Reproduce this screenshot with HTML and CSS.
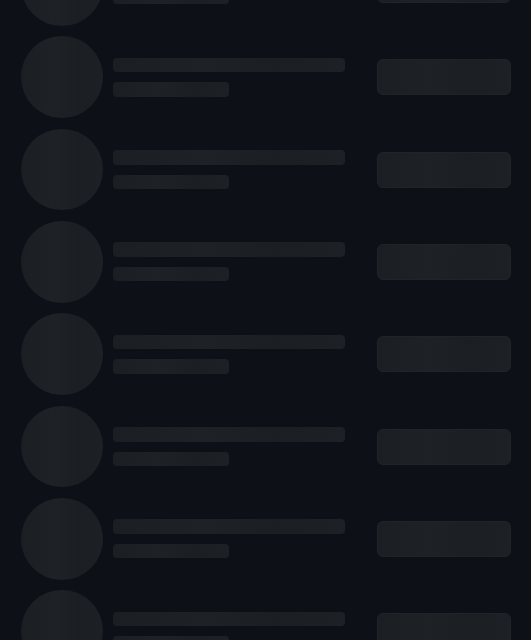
FILE: index.html
```html
<!DOCTYPE html>
<html lang="en">

<head>
    <meta charset="UTF-8">
    <meta name="viewport" content="width=device-width, initial-scale=1.0">
    <title>Loading</title>
    <link rel="stylesheet" href="styles.css">
</head>

<body>
    <div class="lista">
        <div class="fila"><div class="avatar"></div><div class="textos"><div class="linea larga"></div><div class="linea corta"></div></div><div class="boton"></div></div>
        <div class="fila"><div class="avatar"></div><div class="textos"><div class="linea larga"></div><div class="linea corta"></div></div><div class="boton"></div></div>
        <div class="fila"><div class="avatar"></div><div class="textos"><div class="linea larga"></div><div class="linea corta"></div></div><div class="boton"></div></div>
        <div class="fila"><div class="avatar"></div><div class="textos"><div class="linea larga"></div><div class="linea corta"></div></div><div class="boton"></div></div>
        <div class="fila"><div class="avatar"></div><div class="textos"><div class="linea larga"></div><div class="linea corta"></div></div><div class="boton"></div></div>
        <div class="fila"><div class="avatar"></div><div class="textos"><div class="linea larga"></div><div class="linea corta"></div></div><div class="boton"></div></div>
        <div class="fila"><div class="avatar"></div><div class="textos"><div class="linea larga"></div><div class="linea corta"></div></div><div class="boton"></div></div>
        <div class="fila"><div class="avatar"></div><div class="textos"><div class="linea larga"></div><div class="linea corta"></div></div><div class="boton"></div></div>
    </div>
</body>

</html>
```

FILE: styles.css
```css
body {
    font-family: "Liberation Sans", Arial, sans-serif;
    margin: 0;
    padding: 0;
    background-color: #0d1117;
    overflow: hidden;
}

.lista {
    margin-top: -61.3px;
    padding: 0 20.5px 0 21px;
}

.fila {
    display: flex;
    align-items: center;
    height: 92.33px;
}

.avatar,
.linea,
.boton {
    background-color: #1c1f24;
    background-image: linear-gradient(90deg, #1b1e23 0%, #1e2126 40%, #1b1e23 70%, #1d2025 100%);
}

.avatar {
    flex: 0 0 81.5px;
    height: 81.5px;
    border-radius: 50%;
}

.textos {
    margin-left: 10.5px;
    display: flex;
    flex-direction: column;
    gap: 10px;
}

.linea {
    height: 14.5px;
    border-radius: 4px;
}

.larga {
    width: 232px;
}

.corta {
    width: 116px;
}

.boton {
    margin-left: auto;
    box-sizing: border-box;
    width: 133.5px;
    height: 36px;
    border: 1px solid #202328;
    border-radius: 6px;
}
```
